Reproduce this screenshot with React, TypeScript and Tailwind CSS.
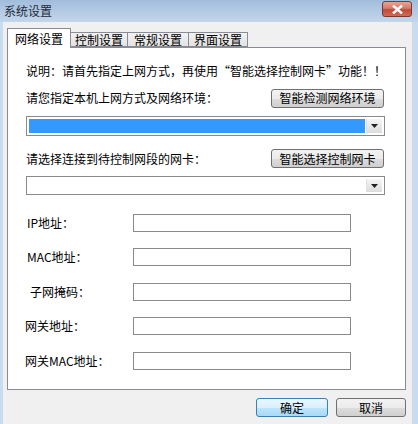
import React from "react";

const font = { fontFamily: '"Noto Sans CJK SC", "Liberation Sans", sans-serif' };

function Btn({ children, w, primary }: { children: React.ReactNode; w: number; primary?: boolean }) {
  return (
    <div
      className={
        "h-[19px] flex items-center justify-center rounded-[3px] border text-[12px] leading-none text-black " +
        (primary
          ? "border-[#3c7fb1] bg-[linear-gradient(#eaf6fd_0%,#d9f0fc_50%,#bee6fd_51%,#a7d9f5_100%)]"
          : "border-[#707070] bg-[linear-gradient(#f2f2f2_0%,#ebebeb_50%,#dddddd_51%,#cfcfcf_100%)]")
      }
      style={{ width: w }}
    >
      {children}
    </div>
  );
}

function Combo({ filled, h }: { filled?: boolean; h: number }) {
  return (
    <div className="ml-[18px] w-[359px] flex border border-[#8a8a8a] bg-white p-[2px] gap-[1px]" style={{ height: h }}>
      <div className={"flex-1 " + (filled ? "bg-[#3399ff]" : "")} />
      <div className="w-[16px] flex items-center justify-center bg-[linear-gradient(#f5f5f5,#dcdcdc)] border-l border-[#e0e0e0]">
        <svg width="7" height="4" viewBox="0 0 7 4">
          <path d="M0 0H7L3.5 4Z" fill="#222" />
        </svg>
      </div>
    </div>
  );
}

function Field({ label, ml, mt }: { label: string; ml: number; mt: number }) {
  return (
    <div className="flex items-center h-[18px]" style={{ marginTop: mt }}>
      <div className="w-[125px] text-[12px] leading-none text-black" style={{ paddingLeft: ml }}>
        {label}
      </div>
      <div className="w-[218px] h-[18px] border border-[#8a8a8a] bg-white" />
    </div>
  );
}

export default function App() {
  return (
    <div className="w-[418px] h-[424px] flex flex-col bg-[#c9dbee] overflow-hidden" style={font}>
      <div className="h-[22px] flex items-center justify-between pl-[4px] pr-[6px] bg-[linear-gradient(#a2bddc,#c3d6ea)]">
        <span className="text-[12px] leading-none text-[#1e2a38]">系统设置</span>
        <div className="w-[30px] h-[16px] mt-[-4px] rounded-[3px] border border-[#7a3a33] bg-[linear-gradient(#e6a595_0%,#d47a6a_45%,#c04a38_55%,#d06a55_100%)] flex items-center justify-center">
          <svg width="11" height="9" viewBox="0 0 11 9">
            <path d="M1 0.5L10 8.5M10 0.5L1 8.5" stroke="#fff" strokeWidth="2.4" />
          </svg>
        </div>
      </div>
      <div className="flex-1 ml-[3px] mr-[6px] bg-[#f0f0f0] flex flex-col pl-[4px] pr-[4px]">
        <div className="flex items-end h-[22px] mt-[3px] text-[12px] leading-none text-black">
          <div className="w-[64px] border border-[#898c95] border-b-0 bg-white flex items-center justify-center relative z-10 mb-[-1px] h-[20px]">
            网络设置
          </div>
          <div className="w-[57px] h-[15px] border border-[#898c95] border-l-0 bg-[linear-gradient(#f2f2f2,#e3e3e3)] flex items-center justify-center">
            控制设置
          </div>
          <div className="w-[61px] h-[15px] border border-[#898c95] border-l-0 bg-[linear-gradient(#f2f2f2,#e3e3e3)] flex items-center justify-center">
            常规设置
          </div>
          <div className="w-[59px] h-[15px] border border-[#898c95] border-l-0 bg-[linear-gradient(#f2f2f2,#e3e3e3)] flex items-center justify-center">
            界面设置
          </div>
        </div>
        <div className="w-[399px] h-[343px] border border-[#898c95] bg-white flex flex-col text-[12px] text-black">
          <div className="mt-[15px] ml-[18px] leading-[16px]">说明：请首先指定上网方式，再使用“智能选择控制网卡”功能！！</div>
          <div className="mt-[10px] ml-[18px] w-[358px] flex items-center justify-between h-[18px]">
            <span className="leading-none">请您指定本机上网方式及网络环境：</span>
            <Btn w={113}>智能检测网络环境</Btn>
          </div>
          <div className="mt-[9px]">
            <Combo filled h={20} />
          </div>
          <div className="mt-[13px] ml-[18px] w-[358px] flex items-center justify-between h-[19px]">
            <span className="leading-none">请选择连接到待控制网段的网卡：</span>
            <Btn w={113}>智能选择控制网卡</Btn>
          </div>
          <div className="mt-[8px]">
            <Combo h={19} />
          </div>
          <div className="flex flex-col">
            <Field label="IP地址：" ml={19} mt={19} />
            <Field label="MAC地址：" ml={19} mt={16} />
            <Field label="子网掩码：" ml={22} mt={17} />
            <Field label="网关地址：" ml={17} mt={16} />
            <Field label="网关MAC地址：" ml={17} mt={17} />
          </div>
        </div>
        <div className="flex justify-end gap-[8px] mt-[8px] pr-[2px]">
          <Btn w={72} primary>确定</Btn>
          <Btn w={70}>取消</Btn>
        </div>
      </div>
    </div>
  );
}
